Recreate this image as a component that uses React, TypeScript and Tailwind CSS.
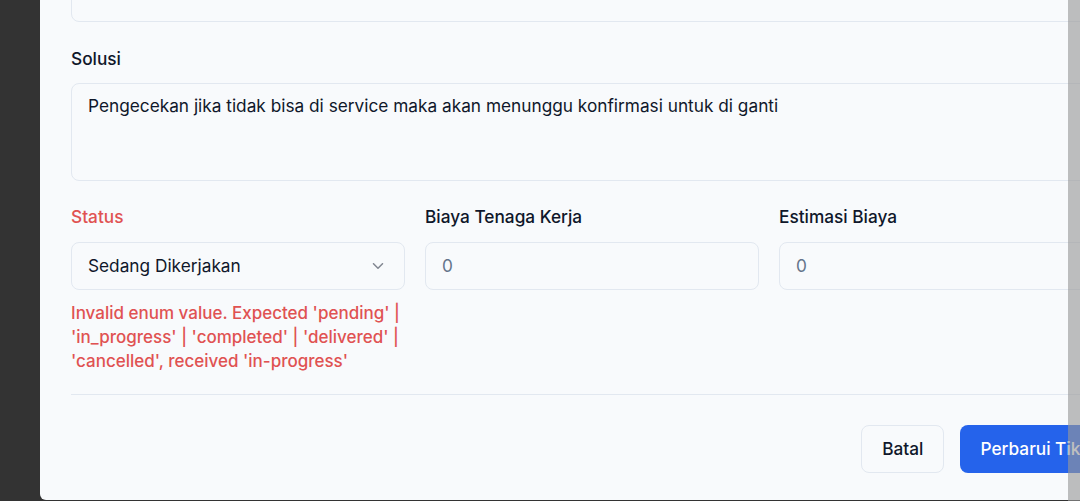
import { ChevronDown } from "lucide-react";

function Field({ label, value }: { label: string; value: string }) {
  return (
    <div className="flex flex-col">
      <label className="mb-[13px] h-6 text-[17.25px] leading-6 font-medium text-[#0f172a]">{label}</label>
      <div className="flex h-[48px] items-center rounded-lg border border-[#e2e8f0] bg-[#f8fafc] px-4 text-[17.25px] text-[#64748b]">
        {value}
      </div>
    </div>
  );
}

export default function App() {
  return (
    <div
      className="relative flex h-[501px] w-[1080px] overflow-hidden bg-[#333333]"
      style={{ fontFamily: "Inter, 'Noto Sans', sans-serif" }}
    >
      <div className="ml-[40px] h-[500px] w-[1104px] shrink-0 overflow-hidden rounded-bl-md bg-[#f8fafc] pl-[31px] pr-[31px] text-[#0f172a]">
        <div className="-mt-[76px] h-[98px] rounded-lg border border-[#e2e8f0]" />

        <label className="mt-[25px] block h-6 text-[17.25px] leading-6 font-medium">Solusi</label>
        <div className="mt-[12px] h-[98px] rounded-lg border border-[#e2e8f0] px-4 pt-[10px] text-[17.25px] leading-6">
          Pengecekan jika tidak bisa di service maka akan menunggu konfirmasi untuk di ganti
        </div>

        <div className="mt-[24px] grid grid-cols-3 gap-5">
          <div className="flex flex-col">
            <label className="mb-[13px] h-6 text-[17.25px] leading-6 font-medium text-[#e05252]">Status</label>
            <div className="flex h-[48px] items-center justify-between rounded-lg border border-[#e2e8f0] pl-4 pr-[17px] text-[17.25px]">
              <span>Sedang Dikerjakan</span>
              <ChevronDown className="h-[18px] w-[18px] text-[#0f172a] opacity-50" strokeWidth={2} />
            </div>
            <p className="mt-[11px] text-[17px] leading-6 font-medium text-[#e05252]">
              Invalid enum value. Expected 'pending' | 'in_progress' | 'completed' | 'delivered' | 'cancelled', received 'in-progress'
            </p>
          </div>
          <Field label="Biaya Tenaga Kerja" value="0" />
          <Field label="Estimasi Biaya" value="0" />
        </div>

        <div className="mt-[21px] border-t border-[#e2e8f0]" />

        <div className="-mr-[3px] flex justify-end gap-4 pt-[30px]">
          <button className="h-[48px] rounded-lg border border-[#e2e8f0] bg-[#f8fafc] px-5 text-[17.25px] font-medium text-[#0f172a]">
            Batal
          </button>
          <button className="h-[48px] rounded-lg bg-[#2563eb] px-5 text-[17.25px] font-medium text-white">
            Perbarui Tiket
          </button>
        </div>
      </div>

      <div className="absolute right-0 top-0 h-full w-[12px] bg-[rgba(151,151,151,0.62)]" />
    </div>
  );
}
